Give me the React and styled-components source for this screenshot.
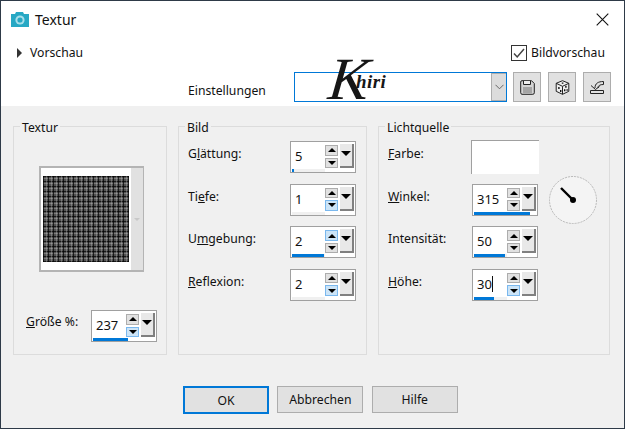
import React from 'react';
import styled, { createGlobalStyle } from 'styled-components';

const GlobalStyle = createGlobalStyle`
  html, body {
    margin: 0;
    padding: 0;
    background: #f0f0f0;
  }
  * {
    box-sizing: border-box;
  }
`;

const Dialog = styled.div`
  width: 625px;
  height: 429px;
  border: 1px solid #2e3a48;
  background: #f0f0f0;
  color: #111;
  font-family: "Noto Sans", "Open Sans", sans-serif;
  font-size: 12.2px;
  display: flex;
  flex-direction: column;
`;

const Header = styled.header`
  background: #fff;
  height: 105px;
  display: flex;
  flex-direction: column;
`;

const TitleBar = styled.div`
  height: 36px;
  padding: 0 15px 0 9px;
  display: flex;
  align-items: center;
`;

const Title = styled.span`
  font-size: 14px;
  margin-left: 5px;
  flex: 1;
`;

const PreviewRow = styled.div`
  height: 23px;
  margin-top: 4px;
  padding: 0 19px 0 16px;
  display: flex;
  align-items: center;
  justify-content: space-between;
`;

const Expander = styled.span`
  display: flex;
  align-items: center;
  gap: 8px;

  &::before {
    content: '';
    border-left: 5px solid #333;
    border-top: 5px solid transparent;
    border-bottom: 5px solid transparent;
  }
`;

const CheckLabel = styled.label`
  display: flex;
  align-items: center;
  gap: 4px;
`;

const CheckBox = styled.span`
  width: 16px;
  height: 16px;
  border: 1px solid #333;
  display: flex;
  align-items: center;
  justify-content: center;
`;

const SettingsRow = styled.div`
  margin-top: 8px;
  padding-left: 187px;
  display: flex;
  align-items: center;
`;

const SettingsLabel = styled.span`
  width: 106px;
  padding-top: 7px;
`;

const Combo = styled.div`
  position: relative;
  width: 213px;
  height: 30px;
  border: 1px solid #0078d7;
  display: flex;
  justify-content: flex-end;
  margin-right: 6px;
`;

const ComboButton = styled.span`
  width: 15px;
  background: #dcdcdc;
  border: 1px solid #adadad;
  border-right: 0;
  display: flex;
  align-items: center;
  justify-content: center;
`;

const Logo = styled.div`
  position: absolute;
  left: 34px;
  top: -24px;
  display: flex;
  font-family: "Liberation Serif", serif;
  font-style: italic;
  color: #161616;
  pointer-events: none;
`;

const LogoInitial = styled.span`
  font-size: 60px;
  line-height: 60px;
  margin-right: -13px;
  transform: skewX(-6deg);
`;

const LogoRest = styled.span`
  font-size: 19px;
  line-height: 20px;
  margin-top: 23px;
  letter-spacing: 0.4px;
  font-weight: bold;
`;

const IconButton = styled.button`
  width: 28px;
  height: 30px;
  padding: 0;
  background: #e1e1e1;
  border: 1px solid #adadad;
  display: flex;
  align-items: center;
  justify-content: center;

  & + & {
    margin-left: 7px;
  }
`;

const Groups = styled.div`
  margin: 20px 14px 0 12px;
  display: flex;
  gap: 11px;
`;

const Group = styled.section`
  position: relative;
  width: ${(p) => p.$width}px;
  height: 229px;
  border: 1px solid #dcdcdc;
  padding: ${(p) => p.$padding};
  display: flex;
  flex-direction: column;
`;

const GroupTitle = styled.span`
  position: absolute;
  top: -8px;
  left: 6px;
  padding: 0 2px 0 2px;
  background: #f0f0f0;
`;

const Rows = styled.div`
  display: flex;
  flex-direction: column;
  gap: 10.67px;
`;

const Row = styled.div`
  display: flex;
  align-items: flex-start;
`;

const FieldLabel = styled.span`
  width: ${(p) => p.$width}px;
  line-height: 17px;
  padding-top: ${(p) => p.$top ?? 4}px;
`;

const Spin = styled.div`
  width: 66px;
  height: 32px;
  background: #fff;
  border: 1px solid #a0a0a0;
  padding: 2px 1px 0;
  display: flex;
  flex-direction: column;
`;

const SpinTop = styled.div`
  height: 24px;
  display: flex;
`;

const SpinValue = styled.span`
  width: 34px;
  padding: 3px 0 0 3px;
  font-size: 13px;
  line-height: 18px;
  display: flex;
  align-items: flex-start;
`;

const Caret = styled.span`
  width: 1px;
  height: 16px;
  margin-top: 1px;
  background: #111;
`;

const Steppers = styled.div`
  width: 13px;
  display: flex;
  flex-direction: column;
  gap: 2px;
  margin-top: 1px;
`;

const Stepper = styled.span`
  height: 11px;
  background: ${(p) => (p.$active ? '#cce4f7' : '#e1e1e1')};
  border: 1px solid ${(p) => (p.$active ? '#7ab8ee' : '#adadad')};
  display: flex;
  align-items: center;
  justify-content: center;
`;

const Arrow = styled.span`
  width: 0;
  height: 0;
  border-left: ${(p) => p.$size}px solid transparent;
  border-right: ${(p) => p.$size}px solid transparent;
  ${(p) => (p.$up ? 'border-bottom' : 'border-top')}: ${(p) => p.$size}px solid #000;
`;

const DropButton = styled.span`
  width: 14px;
  height: 24px;
  margin-left: 2px;
  background: #e8e8e8;
  border-right: 2px solid #808080;
  border-bottom: 2px solid #808080;
  display: flex;
  justify-content: center;
  padding-top: 7px;
`;

const Track = styled.div`
  width: 33px;
  height: 3px;
  margin-top: 1px;
  background: #f0f0f0;
`;

const Fill = styled.div`
  height: 3px;
  background: #0078d7;
`;

const PreviewFrame = styled.div`
  width: 105px;
  height: 106px;
  margin-left: 13px;
  background: #fff;
  border: 2px solid #b4b4b4;
  border-right-width: 1px;
  display: flex;
`;

const PreviewCanvas = styled.div`
  flex: 1;
  padding: 8px 0 0 2px;
`;

const Texture = styled.div`
  width: 86px;
  height: 86px;
  background-color: #505050;
  background-image:
    repeating-linear-gradient(90deg, rgba(0, 0, 0, 0.7) 0 1px, transparent 1px 3px, rgba(215, 215, 215, 0.3) 3px 4px, transparent 4px 5px),
    repeating-linear-gradient(0deg, rgba(0, 0, 0, 0.7) 0 1px, transparent 1px 3px, rgba(215, 215, 215, 0.3) 3px 4px, transparent 4px 5px);
`;

const PreviewScroll = styled.div`
  width: 12px;
  background: #e1e1e1;
  display: flex;
  align-items: center;
  justify-content: center;
  padding-top: 1px;
`;

const ScrollArrow = styled.span`
  border-left: 3px solid transparent;
  border-right: 3px solid transparent;
  border-top: 3px solid #c8c8c8;
`;

const SizeRow = styled(Row)`
  margin-top: 38px;
`;

const Swatch = styled.div`
  width: 68px;
  height: 34px;
  margin: -1px 0 -1px -1px;
  background: #fff;
  border-top: 1px solid #a0a0a0;
  border-left: 1px solid #a0a0a0;
`;

const Dial = styled.svg`
  margin: -8px 0 -8px 11px;
  flex: none;
`;

const Footer = styled.div`
  margin-top: 31px;
  padding-left: 182px;
  display: flex;
  gap: 8.4px;
`;

const Button = styled.button`
  width: 86px;
  height: ${(p) => (p.$primary ? 28 : 27)}px;
  padding: 0;
  background: #e1e1e1;
  border: ${(p) => (p.$primary ? '2px solid #0078d7' : '1px solid #adadad')};
  color: #111;
  font: inherit;
`;

const CameraIcon = () => (
  <svg width="20" height="17" viewBox="0 0 20 17">
    <path d="M1 3h4l1-2h7l1 2h5v13H1z" fill="#27a8c4" />
    <circle cx="10" cy="9" r="4.6" fill="#a9dfea" />
    <circle cx="10" cy="9" r="2.6" fill="#27a8c4" />
  </svg>
);

const CloseIcon = () => (
  <svg width="13" height="13" viewBox="0 0 13 13">
    <path d="M.7.7l11.6 11.6M12.3.7L.7 12.3" stroke="#111" strokeWidth="1.1" fill="none" />
  </svg>
);

const CheckIcon = () => (
  <svg width="14" height="14" viewBox="0 0 14 14">
    <path d="M2 7.5l3.2 3.4L12 3" stroke="#444" strokeWidth="1.5" fill="none" />
  </svg>
);

const ChevronIcon = () => (
  <svg width="9" height="6" viewBox="0 0 9 6">
    <path d="M.5.8l4 4 4-4" stroke="#666" fill="none" />
  </svg>
);

const SaveIcon = () => (
  <svg width="15" height="15" viewBox="0 0 15 15">
    <path d="M2 .7h9.5l2.8 2.8v9.3a1.5 1.5 0 0 1-1.5 1.5H2A1.5 1.5 0 0 1 .7 12.8V2A1.3 1.3 0 0 1 2 .7z" fill="#d4d4d4" stroke="#222" />
    <path d="M3.5 1v3.5h7V1" fill="#eee" stroke="#222" />
    <path d="M3 8h9M3 10h9M3 12h9" stroke="#777" />
  </svg>
);

const DieIcon = () => (
  <svg width="15" height="15" viewBox="0 0 15 15">
    <path d="M7.5.7l6.3 2.6v8L7.5 14.3 1.2 11.3v-8z" fill="#eee" stroke="#222" />
    <path d="M1.2 3.3l6.3 3 6.3-3M7.5 6.3v8" stroke="#222" fill="none" />
    <path d="M10.2 5.7h1.4v2h-1.4zM9 9.2h1.4v2H9zM11.6 9h1v2h-1zM3.2 7h1.4v2H3.2zM5 10h1.4v2H5zM6.8 2.6h1.6v1.2H6.8z" fill="#111" />
  </svg>
);

const ResetIcon = () => (
  <svg width="16" height="16" viewBox="0 0 16 16">
    <path d="M6 9C6 4.5 9 2.5 14.5 2.5v3C11 5.5 9 6.5 9 9" fill="#e1e1e1" stroke="#222" />
    <path d="M2 6.5L6.5 10.5 10.5 7.5" fill="none" stroke="#222" />
    <path d="M1.5 11.5h13v3h-13z" fill="#e1e1e1" stroke="#222" />
  </svg>
);

const SpinBox = ({ value, fill, activeUp, activeDown, caret }) => (
  <Spin>
    <SpinTop>
      <SpinValue>
        {value}
        {caret && <Caret />}
      </SpinValue>
      <Steppers>
        <Stepper $active={activeUp}>
          <Arrow $up $size={4} />
        </Stepper>
        <Stepper $active={activeDown}>
          <Arrow $size={4} />
        </Stepper>
      </Steppers>
      <DropButton>
        <Arrow $size={5} />
      </DropButton>
    </SpinTop>
    <Track>
      <Fill style={{ width: fill }} />
    </Track>
  </Spin>
);

const imageFields = [
  { label: <>G<u>l</u>ättung:</>, value: 5, fill: 2 },
  { label: <>Ti<u>e</u>fe:</>, value: 1, fill: 0, activeDown: true },
  { label: <>U<u>m</u>gebung:</>, value: 2, fill: 32, activeUp: true },
  { label: <><u>R</u>eflexion:</>, value: 2, fill: 0, activeDown: true },
];

const App = () => (
  <>
    <GlobalStyle />
    <Dialog>
      <Header>
        <TitleBar>
          <CameraIcon />
          <Title>Textur</Title>
          <CloseIcon />
        </TitleBar>
        <PreviewRow>
          <Expander>Vorschau</Expander>
          <CheckLabel>
            <CheckBox>
              <CheckIcon />
            </CheckBox>
            Bildvorschau
          </CheckLabel>
        </PreviewRow>
        <SettingsRow>
          <SettingsLabel>Einstellungen</SettingsLabel>
          <Combo>
            <Logo>
              <LogoInitial>K</LogoInitial>
              <LogoRest>hiri</LogoRest>
            </Logo>
            <ComboButton>
              <ChevronIcon />
            </ComboButton>
          </Combo>
          <IconButton>
            <SaveIcon />
          </IconButton>
          <IconButton>
            <DieIcon />
          </IconButton>
          <IconButton>
            <ResetIcon />
          </IconButton>
        </SettingsRow>
      </Header>

      <Groups>
        <Group $width={154} $padding="39px 0 0 12px">
          <GroupTitle>Textur</GroupTitle>
          <PreviewFrame>
            <PreviewCanvas>
              <Texture />
            </PreviewCanvas>
            <PreviewScroll>
              <ScrollArrow />
            </PreviewScroll>
          </PreviewFrame>
          <SizeRow>
            <FieldLabel $width={65} $top={3}>
              <u>G</u>röße %:
            </FieldLabel>
            <SpinBox value={237} fill={35} activeDown />
          </SizeRow>
        </Group>

        <Group $width={189} $padding="14px 0 0 9px">
          <GroupTitle>Bild</GroupTitle>
          <Rows>
            {imageFields.map((field, index) => (
              <Row key={index}>
                <FieldLabel $width={102}>{field.label}</FieldLabel>
                <SpinBox {...field} />
              </Row>
            ))}
          </Rows>
        </Group>

        <Group $width={232} $padding="14px 0 0 9px">
          <GroupTitle>Lichtquelle</GroupTitle>
          <Rows>
            <Row>
              <FieldLabel $width={84}>
                <u>F</u>arbe:
              </FieldLabel>
              <Swatch />
            </Row>
            <Row>
              <FieldLabel $width={84}>
                <u>W</u>inkel:
              </FieldLabel>
              <SpinBox value={315} fill={56} />
              <Dial width="48" height="48" viewBox="0 0 48 48">
                <circle cx="24" cy="24" r="23.5" fill="#f4f4f4" stroke="#b8b8b8" strokeDasharray="2 1" />
                <path d="M12 12l12 12" stroke="#000" strokeWidth="2.4" />
                <circle cx="24" cy="24" r="3" fill="#000" />
              </Dial>
            </Row>
            <Row>
              <FieldLabel $width={84}>
                Intensität:
              </FieldLabel>
              <SpinBox value={50} fill={31} />
            </Row>
            <Row>
              <FieldLabel $width={84}>
                <u>H</u>öhe:
              </FieldLabel>
              <SpinBox value={30} fill={20} activeDown caret />
            </Row>
          </Rows>
        </Group>
      </Groups>

      <Footer>
        <Button $primary>OK</Button>
        <Button>Abbrechen</Button>
        <Button>Hilfe</Button>
      </Footer>
    </Dialog>
  </>
);

export default App;
